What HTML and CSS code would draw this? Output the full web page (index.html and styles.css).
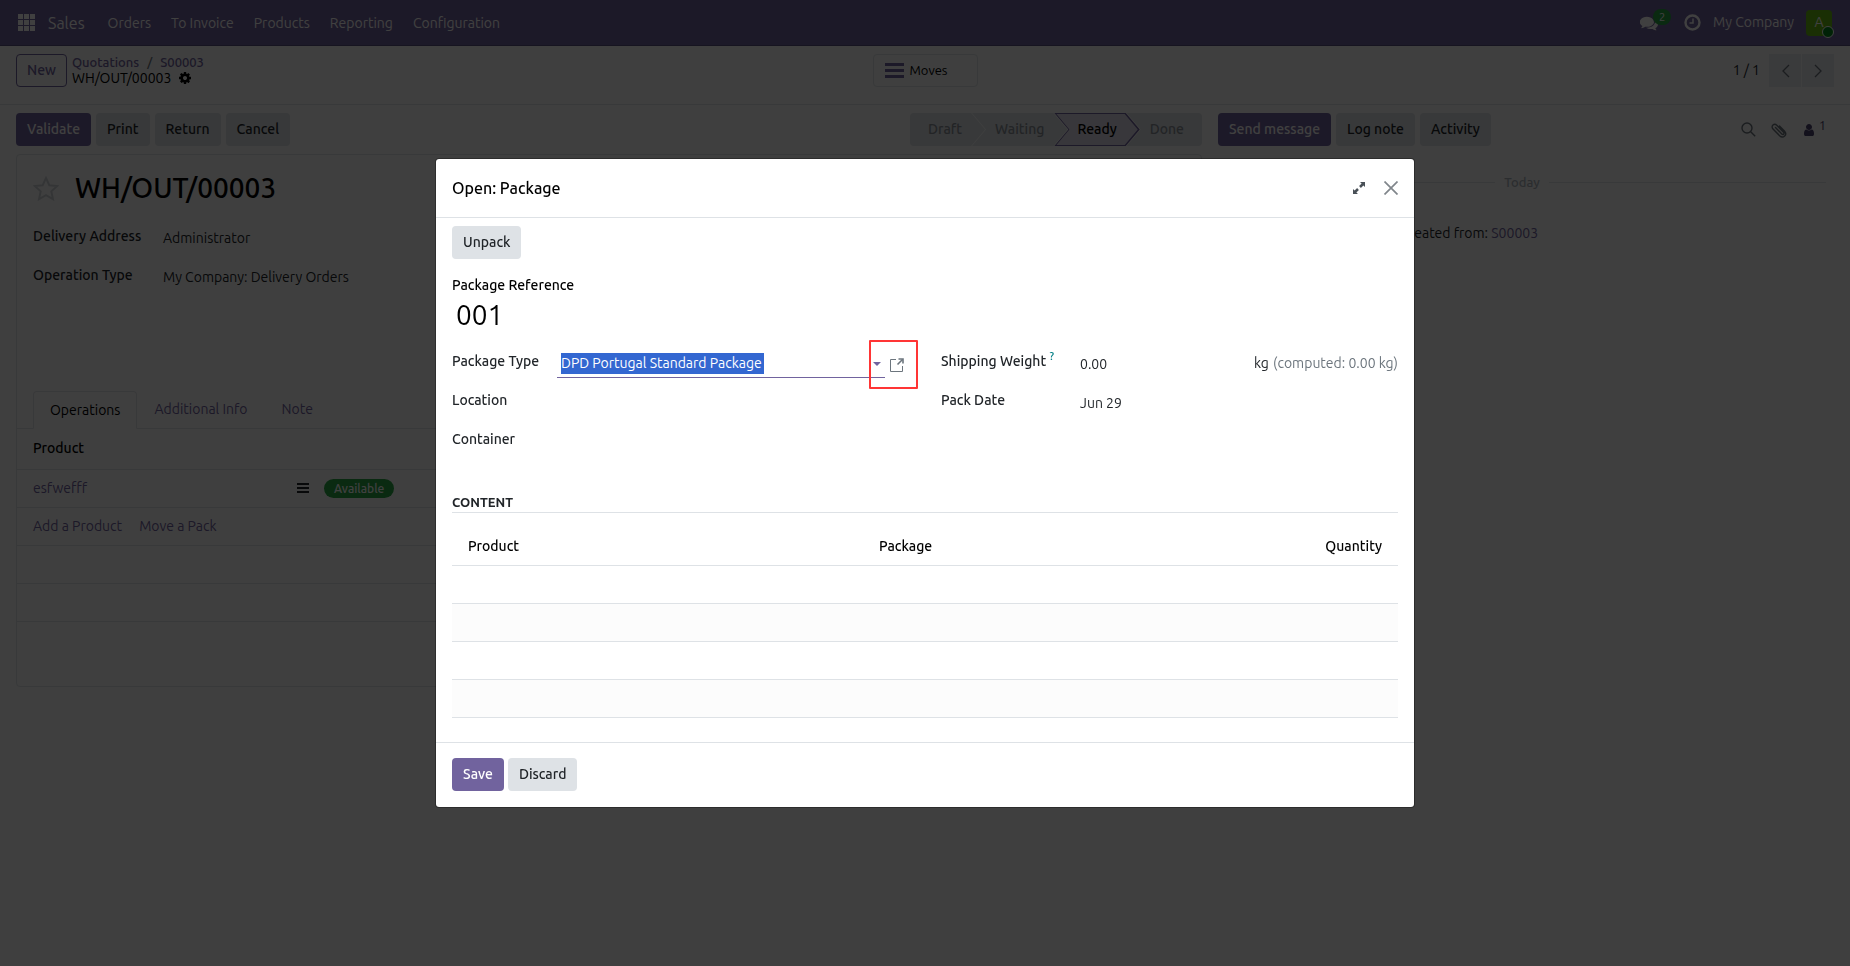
FILE: index.html
```html
<!DOCTYPE html>
<html lang="en">
  <head>
    <meta charset="UTF-8">
    <title>WH/OUT/00003</title>
    <link rel="stylesheet" href="styles.css">
  </head>

  <body>
    <nav class="navbar">
      <button class="apps" aria-label="Apps">
        <svg width="18" height="18" viewBox="0 0 18 18" fill="currentColor"><path d="M0 0h5v5H0zM6 0h5v5H6zM12 0h5v5h-5zM0 6h5v5H0zM6 6h5v5H6zM12 6h5v5h-5zM0 12h5v5H0zM6 12h5v5H6zM12 12h5v5h-5z"/></svg>
      </button>
      <a href="#" class="brand">Sales</a>
      <a href="#">Orders</a>
      <a href="#">To Invoice</a>
      <a href="#">Products</a>
      <a href="#">Reporting</a>
      <a href="#">Configuration</a>
      <div class="systray">
        <button class="chat" aria-label="Messages">
          <svg width="18" height="18" viewBox="0 0 1792 1792" fill="currentColor"><path d="M1408 768q0 139-94 257t-256.500 186.500-353.500 68.500q-86 0-176-16-124 88-278 128-36 9-86 16h-3q-11 0-20.500-8t-11.500-21q-1-9 2-19 10-16 16-20 60-65 97-141-124-72-195-177t-71-224q0-139 94-257t256.500-186.500 353.500-68.500 353.500 68.500 256.500 186.500 94 257zm384 256q0 120-71 224.500t-195 176.500q30 70 97 141 12 12 18 30-3 28-35 29-50-7-86-16-154-40-278-128-90 16-176 16-271 0-472-132 58 4 88 4 161 0 309-45t264-129q125-92 192-212t67-254q0-77-23-152 129 71 204 178t75 230z"/></svg>
          <span class="count">2</span>
        </button>
        <button aria-label="Activities">
          <svg width="17" height="17" viewBox="0 0 17 17" fill="none" stroke="currentColor"><circle cx="8.500" cy="8.500" r="7" stroke-width="2.400"/><path d="M9 4.500v4.500H5.500" stroke-width="1.500"/></svg>
        </button>
        <span>My Company</span>
        <button class="avatar" aria-label="User">A<span class="online"></span></button>
      </div>
    </nav>

    <header class="control">
      <div class="control-left">
        <button class="btn outline">New</button>
        <div class="crumbs">
          <div class="crumb-links"><a href="#">Quotations</a><span>/</span><a href="#">S00003</a></div>
          <div class="crumb-current">WH/OUT/00003
            <svg width="14" height="14" viewBox="0 0 1792 1792" fill="currentColor"><path d="M1152 896q0-106-75-181t-181-75-181 75-75 181 75 181 181 75 181-75 75-181zm512-109v222q0 12-8 23t-20 13l-185 28q-19 54-39 91 35 50 107 138 10 12 10 25t-9 23q-27 37-99 108t-94 71q-12 0-26-9l-138-108q-44 23-91 38-16 136-29 186-7 28-36 28h-222q-14 0-24.500-8.500t-11.500-21.500l-28-184q-49-16-90-37l-141 107q-10 9-25 9-14 0-25-11-126-114-165-168-7-10-7-23 0-12 8-23 15-21 51-66.500t54-70.500q-27-50-41-99l-183-27q-13-2-21-12.500t-8-23.500v-222q0-12 8-23t19-13l186-28q14-46 39-92-40-57-107-138-10-12-10-24 0-10 9-23 26-36 98.500-107.500t94.500-71.500q13 0 26 10l138 107q44-23 91-38 16-136 29-186 7-28 36-28h222q14 0 24.500 8.500t11.500 21.500l28 184q49 16 90 37l142-107q9-9 24-9 13 0 25 10 129 119 165 170 7 8 7 22 0 12-8 23-15 21-51 66.500t-54 70.500q26 50 41 98l183 28q13 2 21 12.500t8 23.500z"/></svg>
          </div>
        </div>
      </div>
      <button class="moves">
        <svg width="19" height="15" viewBox="0 0 19 15" fill="currentColor"><path d="M0 0h19v3H0zM0 6h19v3H0zM0 12h19v3H0z"/></svg>
        Moves
      </button>
      <div class="pager">
        <span>1 / 1</span>
        <button aria-label="Previous"><svg width="9" height="14" viewBox="0 0 9 14" fill="none" stroke="currentColor" stroke-width="1.300"><path d="M8 1L2 7l6 6"/></svg></button>
        <button aria-label="Next"><svg width="9" height="14" viewBox="0 0 9 14" fill="none" stroke="currentColor" stroke-width="1.300"><path d="M1 1l6 6-6 6"/></svg></button>
      </div>
    </header>

    <div class="content">
      <main class="form">
        <div class="statusbar">
          <button class="btn primary">Validate</button>
          <button class="btn">Print</button>
          <button class="btn">Return</button>
          <button class="btn">Cancel</button>
          <div class="steps">
            <button class="step first">Draft</button>
            <button class="step">Waiting</button>
            <button class="step active">Ready</button>
            <button class="step last">Done</button>
          </div>
        </div>

        <section class="sheet">
          <div class="title">
            <svg width="26" height="25" viewBox="0 0 26 25" fill="none" stroke="currentColor" stroke-width="2"><path d="M13 2l3.300 7.200 8 .8-6 5.300 1.700 7.900-7-4.100-7 4.100 1.700-7.900-6-5.300 8-.8z"/></svg>
            <h1>WH/OUT/00003</h1>
          </div>
          <div class="details">
            <div class="row"><span class="label">Delivery Address</span><span class="value">Administrator</span></div>
            <div class="row"><span class="label">Operation Type</span><span class="value">My Company: Delivery Orders</span></div>
          </div>
          <div class="tabs">
            <button class="tab current">Operations</button>
            <button class="tab">Additional Info</button>
            <button class="tab">Note</button>
          </div>
          <table class="lines">
            <thead>
              <tr><th>Product</th></tr>
            </thead>
            <tbody>
              <tr>
                <td>
                  <div class="line">
                    <a href="#" class="product">esfwefff</a>
                    <svg width="12" height="10" viewBox="0 0 12 10" fill="currentColor"><path d="M0 0h12v2H0zM0 4h12v2H0zM0 8h12v2H0z"/></svg>
                    <span class="badge">Available</span>
                  </div>
                </td>
              </tr>
              <tr><td><div class="adders"><a href="#">Add a Product</a><a href="#">Move a Pack</a></div></td></tr>
              <tr><td></td></tr>
              <tr><td></td></tr>
            </tbody>
          </table>
        </section>
      </main>

      <aside class="chatter">
        <div class="chatter-bar">
          <button class="btn primary">Send message</button>
          <button class="btn">Log note</button>
          <button class="btn">Activity</button>
          <div class="chatter-icons">
            <button aria-label="Search"><svg width="15" height="15" viewBox="0 0 15 15" fill="none" stroke="currentColor" stroke-width="1.400"><circle cx="6" cy="6" r="5"/><path d="M9.700 9.700l4.500 4.500"/></svg></button>
            <button aria-label="Attach"><svg width="16" height="16" viewBox="0 0 16 16" fill="none" stroke="currentColor" stroke-width="1.400" stroke-linecap="round"><path d="M4.500 5.500l6.300 6.500c1.300 1.300 3-.4 1.800-1.700L5.800 3.200C3.200.7-.6 4.200 2 6.900l6.600 6.800c3.600 3.500 8.300-1.200 4.800-4.800L8.500 4"/></svg></button>
            <button class="followers" aria-label="Followers"><svg width="14" height="14" viewBox="0 0 1792 1792" fill="currentColor"><path d="M1536 1399q0 109-62.500 187t-150.500 78h-854q-88 0-150.500-78t-62.500-187q0-85 8.500-160.500t31.500-152 58.500-131 94-89 134.500-34.500q131 128 313 128t313-128q76 0 134.500 34.500t94 89 58.500 131 31.500 152 8.500 160.500zm-256-887q0 159-112.500 271.500t-271.500 112.500-271.500-112.500-112.500-271.500 112.500-271.500 271.500-112.500 271.500 112.500 112.500 271.500z"/></svg><sup>1</sup></button>
          </div>
        </div>
        <div class="day"><span>Today</span></div>
        <p class="message">This transfer has been created from: <a href="#">S00003</a></p>
      </aside>
    </div>

    <div class="backdrop">
      <div class="modal" role="dialog" aria-labelledby="modal-title">
        <div class="modal-header">
          <h2 id="modal-title">Open: Package</h2>
          <button aria-label="Expand"><svg width="12" height="12" viewBox="0 0 12 12" fill="currentColor"><path d="M7 0h5v5l-1.600-1.600-2.500 2.500-1.800-1.800 2.500-2.500zM5 12H0V7l1.600 1.600 2.500-2.500 1.800 1.800-2.500 2.500z"/></svg></button>
          <button class="close" aria-label="Close"><svg width="14" height="14" viewBox="0 0 14 14" fill="none" stroke="currentColor" stroke-width="1.700"><path d="M.5.5l13 13M13.500.5l-13 13"/></svg></button>
        </div>

        <div class="modal-body">
          <button class="btn">Unpack</button>
          <label class="name-label" for="name">Package Reference</label>
          <input class="name" id="name" type="text" value="001">

          <div class="groups">
            <div class="group">
              <div class="row">
                <label for="type">Package Type</label>
                <div class="picker">
                  <input id="type" type="text" value="DPD Portugal Standard Package">
                  <svg width="8" height="4" viewBox="0 0 8 4" fill="currentColor"><path d="M0 0h8L4 4z"/></svg>
                </div>
                <button class="external" aria-label="Internal link">
                  <svg width="14" height="14" viewBox="0 0 14 14" fill="none" stroke="currentColor"><path d="M6 1.500H.5v12h12V8"/><path d="M7.500 6.500l5-5" stroke-width="1.600"/><path d="M8.500 1H13v4.500" stroke-width="1.600"/></svg>
                  <span class="mark"></span>
                </button>
              </div>
              <div class="row"><label for="location">Location</label><input id="location" type="text"></div>
              <div class="row"><label for="container">Container</label><input id="container" type="text"></div>
            </div>
            <div class="group wide">
              <div class="row">
                <label for="weight">Shipping Weight <sup>?</sup></label>
                <input id="weight" type="text" value="0.00">
                <span class="unit">kg <span class="computed">(computed: 0.00 kg)</span></span>
              </div>
              <div class="row"><label for="date">Pack Date</label><input id="date" type="text" value="Jun 29"></div>
            </div>
          </div>

          <h3>Content</h3>
          <table class="quants">
            <thead>
              <tr><th class="col-product">Product</th><th>Package</th><th class="right">Quantity</th></tr>
            </thead>
            <tbody>
              <tr><td colspan="3"></td></tr>
              <tr><td colspan="3"></td></tr>
              <tr><td colspan="3"></td></tr>
              <tr><td colspan="3"></td></tr>
            </tbody>
          </table>
        </div>

        <div class="modal-footer">
          <button class="btn primary">Save</button>
          <button class="btn">Discard</button>
        </div>
      </div>
    </div>
    <script src="script.js"></script>
  </body>
</html>
```

FILE: script.js
```js
// the package type opens focused with its text selected
var type = document.getElementById("type");
type.focus();
type.select();
```

FILE: styles.css
```css
* {
  box-sizing: border-box;
}

html {
  height: 100%;
}

body {
  margin: 0;
  min-height: 100%;
  font-family: Ubuntu, "Noto Sans", sans-serif;
  font-size: 14px;
  line-height: 21px;
  color: #212529;
  background: #fafafa;
}

a {
  color: #71639e;
  text-decoration: none;
}

button,
input {
  font: inherit;
  color: inherit;
  border: none;
  background: none;
  padding: 0;
}

button {
  cursor: pointer;
}

svg {
  display: block;
  flex: none;
}

h1, h2, h3, p {
  margin: 0;
}

table {
  width: 100%;
  border-collapse: collapse;
}

th {
  font-weight: 500;
  text-align: left;
  color: #000;
}

.btn {
  height: 33px;
  padding: 0 11px;
  border-radius: 4px;
  font-weight: 500;
  background: #dee2e6;
}

.primary {
  background: #71639e;
  color: #fff;
}

.outline {
  padding: 0 10px;
  border: 1px solid #71639e;
  background: none;
  color: #71639e;
}

/* top bar */
.navbar {
  display: flex;
  align-items: center;
  height: 46px;
  padding: 0 18px 0 8px;
  background: #71639e;
  border-bottom: 1px solid #5a4f7f;
  color: #fff;
}

.navbar a {
  padding: 1px 10px 0;
  color: #fff;
}

.apps {
  padding: 0 4px 0 10px;
}

.navbar .brand {
  padding: 1px 13px 0 8px;
  font-size: 16px;
}

.systray {
  display: flex;
  align-items: center;
  gap: 12px;
  margin-left: auto;
}

.chat {
  position: relative;
  margin-right: 14px;
}

.count {
  position: absolute;
  left: 13px;
  top: -5px;
  padding: 0 6px;
  border-radius: 8px;
  background: #28a745;
  font-size: 11px;
  line-height: 16px;
}

.avatar {
  position: relative;
  width: 26px;
  height: 26px;
  border-radius: 4px;
  background: #6abd10;
}

.online {
  position: absolute;
  right: -2px;
  bottom: -2px;
  width: 12px;
  height: 12px;
  border: 1px solid #fff;
  border-radius: 50%;
  background: #008818;
}

/* control panel */
.control {
  display: grid;
  grid-template-columns: 1fr auto 1fr;
  align-items: start;
  height: 59px;
  padding: 8px 16px;
  border-bottom: 1px solid #dee2e6;
}

.control-left {
  display: flex;
}

.crumbs {
  padding-left: 5px;
  line-height: 16px;
}

.crumb-links {
  display: flex;
  gap: 8px;
  font-size: 13px;
  font-weight: 500;
}

.crumb-links span {
  color: #6c757d;
}

.crumb-current {
  display: flex;
  align-items: center;
  gap: 7px;
  color: #000;
}

.moves {
  display: flex;
  align-items: center;
  gap: 6px;
  width: 105px;
  height: 33px;
  padding: 0 11px;
  border: 1px solid #dee2e6;
  border-radius: 4px;
  font-size: 13px;
  color: #000;
}

.moves svg {
  color: #71639e;
}

.pager {
  display: flex;
  align-items: center;
  justify-content: flex-end;
  gap: 1px;
}

.pager span {
  padding-right: 8px;
}

.pager button {
  display: flex;
  align-items: center;
  justify-content: center;
  width: 32px;
  height: 33px;
  background: #e7e9ed;
  color: #6c757d;
}

/* form */
.content {
  display: flex;
}

.form {
  flex: 1;
  padding: 8px 0 0 16px;
}

.statusbar {
  display: flex;
  gap: 5px;
  padding-bottom: 8px;
}

.steps {
  display: flex;
  margin-left: auto;
}

.step {
  height: 33px;
  margin-left: -13px;
  padding: 0 23px;
  background: #dee2e6;
  color: #8a9098;
  font-weight: 500;
  clip-path: polygon(0 0, calc(100% - 14px) 0, 100% 50%, calc(100% - 14px) 100%, 0 100%, 14px 50%);
}

.first {
  margin-left: 0;
  padding-left: 18px;
  border-radius: 4px 0 0 4px;
  clip-path: polygon(0 0, calc(100% - 14px) 0, 100% 50%, calc(100% - 14px) 100%, 0 100%);
}

.last {
  padding-right: 18px;
  border-radius: 0 4px 4px 0;
  clip-path: polygon(0 0, 100% 0, 100% 100%, 0 100%, 14px 50%);
}

.active {
  position: relative;
  z-index: 0;
  background: #71639e;
  color: #000;
}

.active::before {
  content: "";
  position: absolute;
  z-index: -1;
  inset: 1px 2px;
  background: #dfdce9;
  clip-path: polygon(0 0, calc(100% - 13px) 0, 100% 50%, calc(100% - 13px) 100%, 0 100%, 13px 50%);
}

.sheet {
  min-height: 533px;
  border: 1px solid #dee2e6;
  border-radius: 4px;
  background: #fcfcfc;
}

.title {
  display: flex;
  align-items: center;
  gap: 16px;
  padding: 14px 16px 19px;
  color: #d0d4d8;
}

.title h1 {
  font-size: 28px;
  line-height: 38px;
  font-weight: 500;
  color: #000;
}

.details {
  height: 165px;
  padding: 0 16px;
}

.row {
  display: flex;
  align-items: flex-start;
  height: 39px;
}

.label,
.row label {
  width: 130px;
  font-weight: 500;
}

.value {
  padding-top: 2px;
}

.tabs {
  display: flex;
  height: 38px;
  padding: 0 16px;
  border-bottom: 1px solid #dee2e6;
}

.tab {
  padding: 0 17px;
  color: #71639e;
}

.current {
  height: 38px;
  padding: 0 16px;
  border: 1px solid #dee2e6;
  border-bottom-color: #fcfcfc;
  border-radius: 4px 4px 0 0;
  color: #000;
}

.lines th,
.lines td {
  height: 38px;
  padding: 0 16px;
  border-bottom: 1px solid #dee2e6;
}

.lines th {
  height: 40px;
}

.line {
  display: flex;
  align-items: center;
}

.product {
  width: 264px;
}

.badge {
  margin-left: 15px;
  padding: 0 10px;
  border-radius: 10px;
  background: #28a745;
  color: #fff;
  font-size: 12px;
  line-height: 19px;
  font-weight: 500;
}

.adders {
  display: flex;
  gap: 17px;
}

/* chatter */
.chatter {
  width: 648px;
  padding: 8px 24px 0 16px;
}

.chatter-bar {
  display: flex;
  gap: 5px;
}

.chatter-icons {
  display: flex;
  align-items: center;
  gap: 15px;
  margin-left: auto;
  color: #6c757d;
}

.followers {
  display: flex;
  align-items: center;
  gap: 3px;
  color: #4c4370;
}

.followers sup {
  height: 33px;
  font-size: 13px;
  line-height: 24px;
}

.day {
  display: flex;
  align-items: center;
  gap: 9px;
  padding-top: 26px;
  font-size: 13px;
  font-weight: 500;
  color: #adb5bd;
}

.day::before,
.day::after {
  content: "";
  flex: 1;
  border-top: 1px solid #dee2e6;
}

.message {
  padding: 30px 0 0 43px;
}

/* dialog */
.backdrop {
  position: fixed;
  inset: 0;
  display: flex;
  align-items: center;
  justify-content: center;
  background: rgba(0, 0, 0, .75);
}

.modal {
  width: 980px;
  border: 1px solid rgba(0, 0, 0, .3);
  border-radius: 4px;
  background: #fff;
  background-clip: padding-box;
}

.modal-header {
  display: flex;
  align-items: center;
  gap: 19px;
  height: 59px;
  padding: 0 16px;
  border-bottom: 1px solid #dee2e6;
  color: #495057;
}

.modal-header h2 {
  flex: 1;
  padding-top: 2px;
  font-size: 16px;
  font-weight: 500;
  color: #000;
}

.close {
  color: #80868b;
}

.modal-body {
  padding: 8px 16px 24px;
}

.name-label {
  display: block;
  padding-top: 16px;
  font-weight: 500;
  color: #000;
}

.name {
  display: block;
  width: 100%;
  height: 38px;
  padding: 0 4px;
  font-size: 28px;
  color: #000;
}

.groups {
  display: grid;
  grid-template-columns: 1fr 1fr;
  gap: 32px;
  padding-top: 17px;
}

.group .row label {
  width: 105px;
}

.group .wide .row label,
.wide .row label {
  width: 135px;
}

.row label sup {
  color: #017e84;
  font-size: 11px;
  line-height: 11px;
}

.row input {
  flex: 1;
  min-width: 0;
  height: 26px;
  padding: 0 4px;
  outline: none;
}

.picker {
  display: flex;
  flex: 1;
  align-items: center;
  justify-content: space-between;
  height: 27px;
  padding: 0 4px;
  border-bottom: 1px solid #71639e;
  color: #71639e;
}

.picker input {
  flex: none;
  width: 203px;
  height: 21px;
  padding: 0;
  color: #212529;
}

.picker input:focus {
  background: #3367d1;
}

.picker input::selection {
  background: #3367d1;
  color: #fff;
}

.external {
  position: relative;
  width: 24px;
  height: 28px;
  padding-left: 5px;
  color: #6c757d;
}

/* red frame round the drop-down arrow and the link */
.mark {
  position: absolute;
  left: -16px;
  top: -11px;
  width: 49px;
  height: 49px;
  border: 2px solid #ff3535;
  border-radius: 1px;
}

.unit {
  padding-top: 2px;
}

.computed {
  margin-left: 1px;
  color: #6c757d;
}

.modal h3 {
  margin: 24px 0 14px;
  border-bottom: 1px solid #dee2e6;
  font-size: 13px;
  line-height: 20px;
  font-weight: 700;
  text-transform: uppercase;
}

.quants th,
.quants td {
  height: 38px;
  padding: 0 16px;
  border-bottom: 1px solid #dee2e6;
}

.quants th {
  height: 39px;
}

.quants tbody tr:nth-child(even) {
  background: #fcfcfc;
}

.col-product {
  width: 411px;
}

.quants .right {
  text-align: right;
}

.modal-footer {
  display: flex;
  gap: 4px;
  padding: 15px 16px 16px;
  border-top: 1px solid #dee2e6;
}
```
